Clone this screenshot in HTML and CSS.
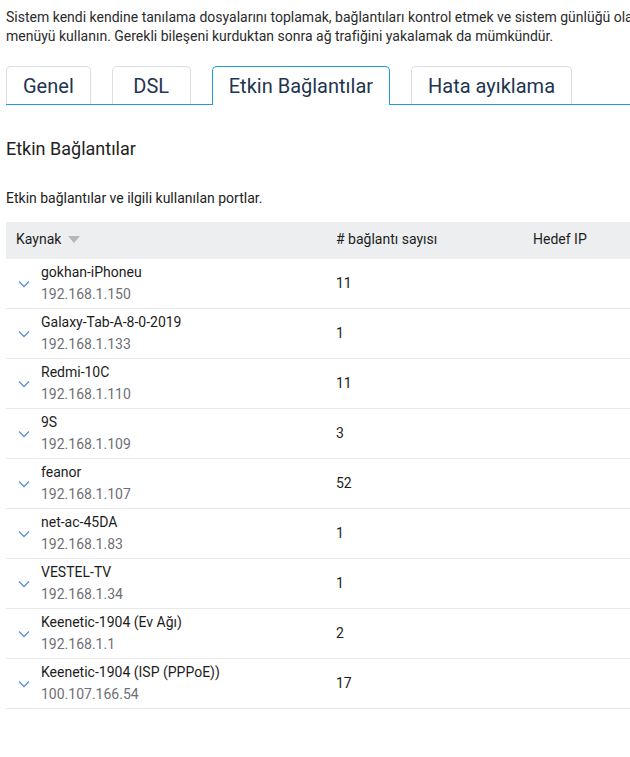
FILE: index.html
```html
<!DOCTYPE html>
<html lang="tr">
<head>
    <meta charset="UTF-8">
    <title>Diagnostik</title>
    <link rel="stylesheet" href="styles.css">
</head>
<body>
<div class="page">

    <p class="intro">Sistem kendi kendine tanılama dosyalarını toplamak, bağlantıları kontrol etmek ve sistem günlüğü olaylarını izlemek için bu<br>menüyü kullanın. Gerekli bileşeni kurduktan sonra ağ trafiğini yakalamak da mümkündür.</p>

    <div class="tabs">
        <div class="tab">Genel</div>
        <div class="tab">DSL</div>
        <div class="tab active">Etkin Bağlantılar</div>
        <div class="tab">Hata ayıklama</div>
    </div>

    <h3 class="title">Etkin Bağlantılar</h3>
    <p class="desc">Etkin bağlantılar ve ilgili kullanılan portlar.</p>

    <div class="table">
        <div class="row head">
            <div class="cell">Kaynak <span class="sort"></span></div>
            <div class="cell"># bağlantı sayısı</div>
            <div class="cell">Hedef IP</div>
        </div>

        <div class="row">
            <div class="cell src">
                <svg class="chev" viewBox="0 0 12 8"><path d="M1 1.5l5 5 5-5" /></svg>
                <div><div class="name">gokhan-iPhoneu</div><div class="ip">192.168.1.150</div></div>
            </div>
            <div class="cell num">11</div>
            <div class="cell"></div>
        </div>
        <div class="row">
            <div class="cell src">
                <svg class="chev" viewBox="0 0 12 8"><path d="M1 1.5l5 5 5-5" /></svg>
                <div><div class="name">Galaxy-Tab-A-8-0-2019</div><div class="ip">192.168.1.133</div></div>
            </div>
            <div class="cell num">1</div>
            <div class="cell"></div>
        </div>
        <div class="row">
            <div class="cell src">
                <svg class="chev" viewBox="0 0 12 8"><path d="M1 1.5l5 5 5-5" /></svg>
                <div><div class="name">Redmi-10C</div><div class="ip">192.168.1.110</div></div>
            </div>
            <div class="cell num">11</div>
            <div class="cell"></div>
        </div>
        <div class="row">
            <div class="cell src">
                <svg class="chev" viewBox="0 0 12 8"><path d="M1 1.5l5 5 5-5" /></svg>
                <div><div class="name">9S</div><div class="ip">192.168.1.109</div></div>
            </div>
            <div class="cell num">3</div>
            <div class="cell"></div>
        </div>
        <div class="row">
            <div class="cell src">
                <svg class="chev" viewBox="0 0 12 8"><path d="M1 1.5l5 5 5-5" /></svg>
                <div><div class="name">feanor</div><div class="ip">192.168.1.107</div></div>
            </div>
            <div class="cell num">52</div>
            <div class="cell"></div>
        </div>
        <div class="row">
            <div class="cell src">
                <svg class="chev" viewBox="0 0 12 8"><path d="M1 1.5l5 5 5-5" /></svg>
                <div><div class="name">net-ac-45DA</div><div class="ip">192.168.1.83</div></div>
            </div>
            <div class="cell num">1</div>
            <div class="cell"></div>
        </div>
        <div class="row">
            <div class="cell src">
                <svg class="chev" viewBox="0 0 12 8"><path d="M1 1.5l5 5 5-5" /></svg>
                <div><div class="name">VESTEL-TV</div><div class="ip">192.168.1.34</div></div>
            </div>
            <div class="cell num">1</div>
            <div class="cell"></div>
        </div>
        <div class="row">
            <div class="cell src">
                <svg class="chev" viewBox="0 0 12 8"><path d="M1 1.5l5 5 5-5" /></svg>
                <div><div class="name">Keenetic-1904 (Ev Ağı)</div><div class="ip">192.168.1.1</div></div>
            </div>
            <div class="cell num">2</div>
            <div class="cell"></div>
        </div>
        <div class="row">
            <div class="cell src">
                <svg class="chev" viewBox="0 0 12 8"><path d="M1 1.5l5 5 5-5" /></svg>
                <div><div class="name">Keenetic-1904 (ISP (PPPoE))</div><div class="ip">100.107.166.54</div></div>
            </div>
            <div class="cell num">17</div>
            <div class="cell"></div>
        </div>
    </div>

</div>
</body>
</html>
```

FILE: styles.css
```css
html, body{
    margin: 0;
    overflow: hidden;
    background: #ffffff;
}

body{
    font-family: Roboto, "Liberation Sans", sans-serif;
    color: #222222;
}

.page{
    width: 900px;
    padding: 0 0 0 6px;
}

.intro{
    margin: 8px 0 0 0;
    font-size: 14px;
    line-height: 19px;
    color: #2b2b2b;
    white-space: nowrap;
}

/* sekmeler */
.tabs{
    display: flex;
    gap: 21px;
    margin-top: 20px;
    border-bottom: 1px solid #1e9ad6;
    height: 38px;
}

.tab{
    height: 38px;
    min-width: 79px;
    box-sizing: border-box;
    padding: 0 16px;
    border: 1px solid #dcdde5;
    border-bottom: none;
    border-radius: 5px 5px 0 0;
    font-size: 20px;
    line-height: 38px;
    text-align: center;
    color: #1f3550;
}

.tab.active{
    border-color: #1e9ad6;
    height: 39px;
    background: #ffffff;
}

.title{
    margin: 32px 0 0 0;
    font-size: 18px;
    font-weight: normal;
    line-height: 24px;
}

.desc{
    margin: 27px 0 0 0;
    font-size: 14px;
    line-height: 20px;
}

/* tablo */
.table{
    margin-top: 14px;
    font-size: 14px;
}

.row{
    display: grid;
    grid-template-columns: 320px 197px 1fr;
    height: 50px;
    box-sizing: border-box;
    padding-bottom: 2px;
    border-bottom: 1px solid #e9e9ec;
    align-items: center;
}

.row.head{
    height: 37px;
    padding-bottom: 4px;
    background: #eceef0;
    border-bottom: none;
    color: #1d1d1d;
}

.cell{
    padding-left: 10px;
}

.sort{
    display: inline-block;
    width: 0; height: 0;
    border-left: 6px solid transparent;
    border-right: 6px solid transparent;
    border-top: 7px solid #b5b7bb;
    margin-left: 3px;
    vertical-align: 1px;
}

.src{
    display: flex;
    align-items: center;
    padding-left: 12px;
}

.chev{
    width: 12px;
    height: 8px;
    margin-right: 11px;
    margin-top: 2px;
    fill: none;
    stroke: #5d8fcf;
    stroke-width: 1.3;
}

.name{
    line-height: 22px;
    color: #1d1d1d;
    margin-top: 0;
}

.ip{
    line-height: 22px;
    color: #6f6f76;
}

.num{
    color: #1d1d1d;
}
```
